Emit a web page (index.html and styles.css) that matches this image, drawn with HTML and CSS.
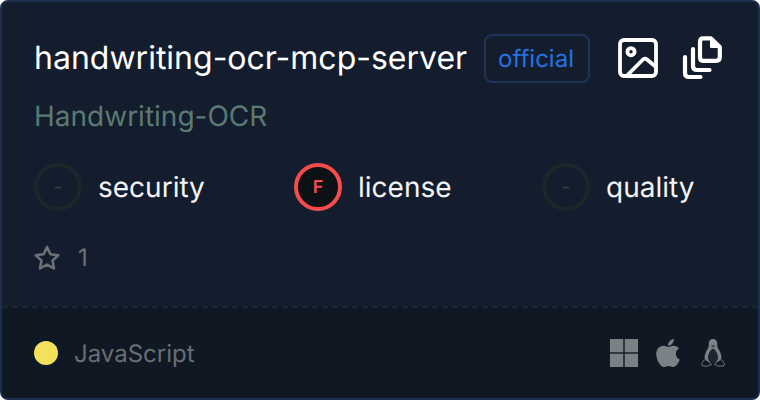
FILE: index.html
```html
<!DOCTYPE html>
<html lang="en">
<head>
  <meta charset="UTF-8">
  <title>handwriting-ocr-mcp-server</title>
  <link rel="stylesheet" href="styles.css">
</head>
<body>
  <div class="card">
    <div class="card-main">
      <div class="title-row">
        <span class="title">handwriting-ocr-mcp-server</span>
        <span class="badge">official</span>
        <svg class="action action-image" viewBox="0 0 40 40" fill="none" stroke="#fff" stroke-width="3.8" stroke-linejoin="round" stroke-linecap="round">
          <rect x="2" y="2" width="36" height="36" rx="4"/>
          <circle cx="13" cy="13.7" r="3.6"/>
          <path d="M9.5 37 L25 21.5 Q27 19.8 29 21.5 L38 29"/>
        </svg>
        <svg class="action action-copy" viewBox="0 0 40 44" fill="none" stroke="#fff" stroke-width="4.2" stroke-linejoin="round" stroke-linecap="round">
          <path d="M21 2.4 H29 L37.8 11 V21 Q37.8 24.8 34 24.8 H21 Q18 24.8 18 21 V6 Q18 2.4 21 2.4 Z"/>
          <path d="M29 2.4 V11 H37.8 Z" fill="#fff" stroke-width="2"/>
          <path d="M11 13 V30 Q11 34 15 34 H27.5"/>
          <path d="M3 21 V37 Q3 41 7 41 H18.5"/>
        </svg>
      </div>
      <div class="owner">Handwriting-OCR</div>
      <div class="grades">
        <div class="grade">
          <span class="grade-circle">-</span>
          <span class="grade-label">security</span>
        </div>
        <div class="grade">
          <span class="grade-circle grade-f">F</span>
          <span class="grade-label">license</span>
        </div>
        <div class="grade">
          <span class="grade-circle">-</span>
          <span class="grade-label">quality</span>
        </div>
      </div>
      <div class="stars">
        <svg class="star" viewBox="0 0 26 26" fill="none" stroke="#6b7075" stroke-width="2.6" stroke-linejoin="round">
          <path d="M13 2 L16.4 9.2 L24.2 10.2 L18.5 15.6 L20 23.4 L13 19.6 L6 23.4 L7.5 15.6 L1.8 10.2 L9.6 9.2 Z"/>
        </svg>
        <span>1</span>
      </div>
    </div>
    <div class="card-footer">
      <span class="lang-dot"></span>
      <span class="lang">JavaScript</span>
      <div class="platforms">
        <svg class="win" viewBox="0 0 28 28" fill="#7a8286">
          <rect width="13.3" height="13.3"/>
          <rect x="14.7" width="13.3" height="13.3"/>
          <rect y="14.7" width="13.3" height="13.3"/>
          <rect x="14.7" y="14.7" width="13.3" height="13.3"/>
        </svg>
        <svg class="apple" viewBox="0 0 384 512" fill="#7a8286">
          <path d="M318.7 268.7c-.2-36.7 16.4-64.4 50-84.8-18.8-26.9-47.2-41.7-84.7-44.6-35.5-2.8-74.3 20.7-88.5 20.7-15 0-49.4-19.7-76.4-19.7C63.3 141.2 4 184.8 4 273.5q0 39.3 14.4 81.2c12.8 36.7 59 126.7 107.2 125.2 25.2-.6 43-17.9 75.8-17.9 31.8 0 48.3 17.9 76.4 17.9 48.6-.7 90.4-82.5 102.6-119.3-65.2-30.7-61.7-90-61.7-91.9zm-56.6-164.2c27.3-32.4 24.8-61.9 24-72.5-24.1 1.4-52 16.4-67.9 34.9-17.5 19.8-27.8 44.3-25.6 71.9 26.1 2 49.9-11.4 69.5-34.3z"/>
        </svg>
        <svg class="linux" viewBox="0 0 26 30">
          <path d="M13 1 C9.8 1 8.8 3.4 8.8 6 C8.8 8.6 8.4 10 7.2 11.8 C5.4 14.6 4.4 17.4 4.6 20 L8 24 L18 24 L21.4 20 C21.6 17.4 20.6 14.6 18.8 11.8 C17.6 10 17.2 8.6 17.2 6 C17.2 3.4 16.2 1 13 1 Z" fill="#7a8286"/>
          <path d="M13 10.4 C11 11.2 8.4 15 8 19 C7.8 22 10 25 13 25 C16 25 18.2 22 18 19 C17.6 15 15 11.2 13 10.4 Z" fill="#1c2530"/>
          <path d="M10.6 7.8 L13 7 L15.4 7.8 L13 9.6 Z" fill="#3a434c"/>
          <path d="M5 21.5 L8.6 23.4 L11.4 26.6 Q7 29.4 2 27.6 Q1 27 2 25.4 Q2.4 23 5 21.5 Z M21 21.5 L17.4 23.4 L14.6 26.6 Q19 29.4 24 27.6 Q25 27 24 25.4 Q23.6 23 21 21.5 Z" fill="#101824" stroke="#7a8286" stroke-width="0.9" stroke-linejoin="round"/>
        </svg>
      </div>
    </div>
  </div>
</body>
</html>
```

FILE: styles.css
```css
* {
  margin: 0;
  padding: 0;
  box-sizing: border-box;
}

body {
  width: 760px;
  height: 400px;
  background-color: #ffffff;
  font-family: "Inter", sans-serif;
  text-rendering: geometricPrecision;
  overflow: hidden;
}

.card {
  width: 760px;
  height: 400px;
  display: flex;
  flex-direction: column;
  background-color: #141d2e;
  border: 2px solid #1e3050;
  border-radius: 8px;
  overflow: hidden;
}

.card-main {
  flex: 1;
  padding: 32px 32px 0;
}

.title-row {
  display: flex;
  align-items: center;
  height: 48px;
}

.title {
  font-size: 32px;
  line-height: 48px;
  color: #ffffff;
  white-space: nowrap;
}

.badge {
  margin-left: 17px;
  height: 49px;
  padding: 0 14px 0 12px;
  border: 2px solid #1e3358;
  border-radius: 8px;
  font-size: 24px;
  line-height: 45px;
  color: #2273e0;
}

.action {
  display: block;
  flex: none;
}

.action-image {
  width: 40px;
  height: 40px;
  margin-left: 28px;
}

.action-copy {
  width: 40px;
  height: 44px;
  margin-left: 24px;
}

.owner {
  margin-top: 17px;
  font-size: 28px;
  line-height: 35px;
  color: #5a7a72;
}

.grades {
  display: grid;
  grid-template-columns: 260px 248px auto;
  margin-top: 29px;
}

.grade {
  display: flex;
  align-items: center;
  gap: 16px;
}

.grade-circle {
  width: 48px;
  height: 48px;
  display: flex;
  align-items: center;
  justify-content: center;
  border: 4px solid #1c2629;
  border-radius: 50%;
  font-size: 18px;
  font-weight: 600;
  color: #343b40;
}

.grade-f {
  background-color: #0b1115;
  border-color: #f84b4b;
  color: #f84b4b;
}

.grade-label {
  font-size: 28px;
  line-height: 46px;
  color: #f2f4f6;
}

.stars {
  display: flex;
  align-items: center;
  gap: 18px;
  margin-top: 23px;
  font-size: 24px;
  line-height: 48px;
  color: #6b7075;
}

.star {
  width: 26px;
  height: 26px;
  display: block;
}

.card-footer {
  height: 92px;
  display: flex;
  align-items: center;
  padding: 0 32px;
  background-color: #101824;
  border-top: 2px dashed #1c2630;
}

.lang-dot {
  width: 24px;
  height: 24px;
  border-radius: 50%;
  background-color: #f4e15b;
}

.lang {
  margin-left: 16px;
  font-size: 24px;
  color: #696e73;
}

.platforms {
  display: flex;
  align-items: center;
  gap: 18px;
  margin-left: auto;
}

.win {
  width: 28px;
  height: 28px;
  display: block;
}

.apple {
  width: 24px;
  height: 32px;
  display: block;
}

.linux {
  width: 26px;
  height: 30px;
  margin-left: 2px;
  display: block;
}
```
